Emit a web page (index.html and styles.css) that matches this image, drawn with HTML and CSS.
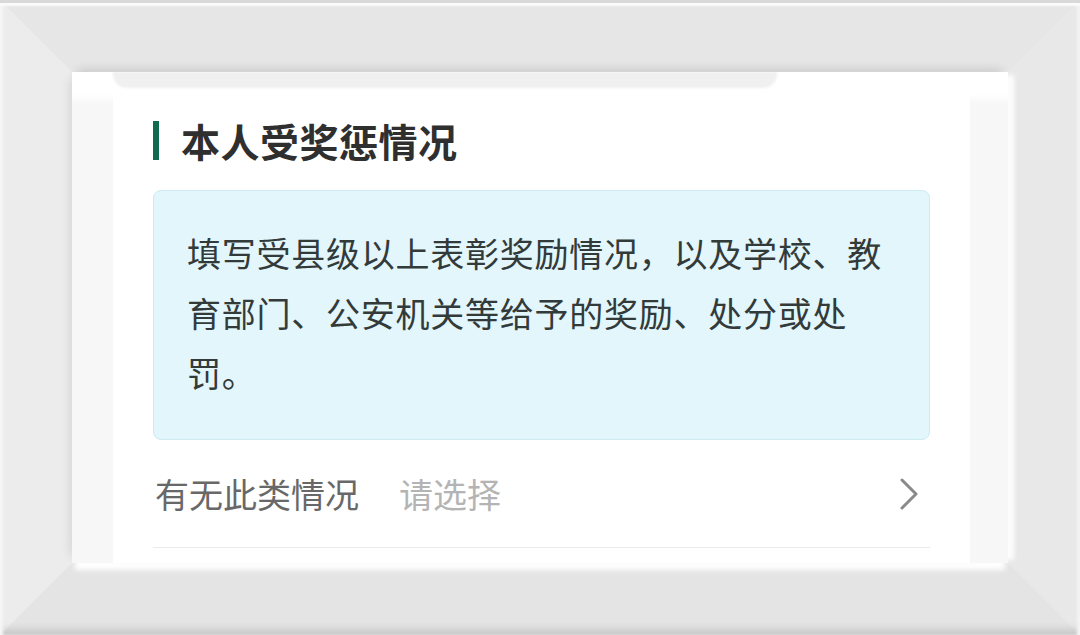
FILE: index.html
```html
<!DOCTYPE html>
<html lang="zh-CN">
<head>
    <meta charset="UTF-8">
    <meta name="viewport" content="width=device-width, initial-scale=1.0">
    <title>本人受奖惩情况</title>
    <link rel="stylesheet" href="styles.css">
</head>
<body>
    <div class="frame">
        <div class="screen">
            <div class="prev-card"></div>

            <section class="card">
                <h2 class="section-title">本人受奖惩情况</h2>

                <div class="notice">填写受县级以上表彰奖励情况，以及学校、教育部门、公安机关等给予的奖励、处分或处罚。</div>

                <div class="field-row">
                    <span class="field-label">有无此类情况</span>
                    <span class="field-value">请选择</span>
                    <svg class="chevron" width="18" height="32" viewBox="0 0 18 32">
                        <polyline points="2,2 16,16 2,30" fill="none" stroke="#8a8a8a" stroke-width="3" stroke-linecap="round" stroke-linejoin="round"/>
                    </svg>
                </div>
            </section>
        </div>
    </div>
</body>
</html>
```

FILE: styles.css
```css
html, body { margin: 0; padding: 0; }
body { width: 1080px; height: 635px; overflow: hidden; background: #e7e7e7; font-family: "Noto Sans CJK SC", "Noto Sans", sans-serif; }

/* picture frame */
.frame {
    position: relative;
    box-sizing: border-box;
    width: 1080px;
    height: 635px;
    border: 72px solid;
    border-color: #e6e6e6 #e8e8e8 #e4e4e4 #ececec;
}
.frame::after {
    content: "";
    position: absolute;
    top: -72px; left: -72px; right: -72px; bottom: -72px;
    pointer-events: none;
    box-shadow:
        inset 0 3px 0 #d9d9d9,
        inset 0 9px 2px -3px #fbfbfb,
        inset 4px 0 3px -1px #f6f6f6,
        inset -4px 0 3px -1px #f4f4f4,
        inset 0 -10px 8px -5px rgba(0, 0, 0, 0.14);
}

.screen {
    height: 100%;
    padding: 0 38px 0 41px;
    background: linear-gradient(#fff 22px, #f7f7f7 32px);
    box-shadow:
        0 -9px 9px -6px rgba(0, 0, 0, 0.12),
        -9px 0 9px -6px rgba(0, 0, 0, 0.08),
        9px 0 5px -3px rgba(255, 255, 255, 0.95),
        0 10px 5px -3px rgba(255, 255, 255, 0.95);
    overflow: hidden;
}

.prev-card {
    width: 664px;
    height: 16px;
    background: #f0f0f0;
    border-radius: 0 0 14px 14px;
    filter: blur(1px);
}

.card {
    background: #fff;
    padding: 32px 40px 0 40px;
    height: 100%;
}

.section-title {
    display: flex;
    align-items: center;
    gap: 22px;
    margin: 0;
    height: 40px;
    font-size: 39px;
    line-height: 40px;
    letter-spacing: 0.5px;
    font-weight: 700;
    color: #2f2f2f;
}
.section-title::before {
    content: "";
    width: 6px;
    height: 39px;
    background: #0e6b4e;
}

.notice {
    margin-top: 30px;
    padding: 32px 33px 36px 33px;
    background: #e2f6fb;
    border: 1px solid #cdebf2;
    border-radius: 8px;
    font-size: 34px;
    line-height: 60px;
    letter-spacing: 0.75px;
    color: #333a3a;
}

.field-row {
    display: flex;
    align-items: center;
    height: 107px;
    border-bottom: 1px solid #ebebeb;
    font-size: 34px;
    line-height: 40px;
}
.field-label { color: #686868; padding-left: 2px; }
.field-value { color: #b4b4b4; margin-left: 40px; }
.chevron { margin-left: auto; margin-right: 12px; }
```
